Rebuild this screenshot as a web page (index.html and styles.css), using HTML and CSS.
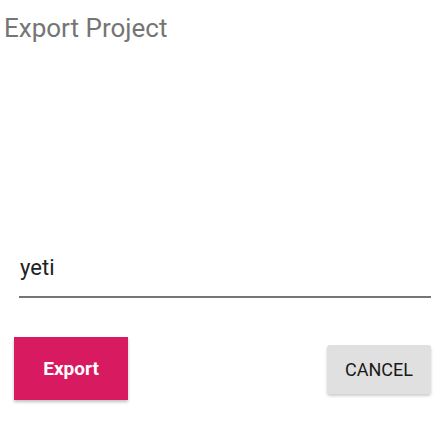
FILE: index.html
```html
<!DOCTYPE html>
<html lang="en">
<head>
    <meta charset="UTF-8">
    <meta name="viewport" content="width=device-width, initial-scale=1.0">
    <title>Export Project</title>
    <link rel="stylesheet" href="styles.css">
</head>
<body>
    <div class="dialog">
        <h2 class="dialog-title">Export Project</h2>
        <div class="field">
            <input type="text" class="name-input" value="yeti">
        </div>
        <div class="actions">
            <button class="btn-export">Export</button>
            <button class="btn-cancel">CANCEL</button>
        </div>
    </div>
</body>
</html>
```

FILE: styles.css
```css
body, html {
    margin: 0;
    padding: 0;
    height: 100%;
    font-family: Roboto, "Liberation Sans", sans-serif;
    background: #fff;
}

.dialog {
    padding: 0 17px 0 14px;
}

.dialog-title {
    margin: 0 0 0 -10px;
    padding-top: 12px;
    font-size: 26px;
    font-weight: normal;
    color: #757575;
    line-height: 32px;
}

.field {
    padding: 211px 0 0 5px;
}

.name-input {
    display: block;
    width: 100%;
    box-sizing: border-box;
    border: none;
    border-bottom: 2px solid #757575;
    padding: 0 0 15px 1px;
    font-family: inherit;
    font-size: 22px;
    line-height: 26px;
    color: #212121;
    outline: none;
    background: transparent;
}

.actions {
    display: flex;
    justify-content: space-between;
    align-items: center;
    margin-top: 39px;
}

.btn-export {
    width: 114px;
    height: 63px;
    border: none;
    background: #d81b60;
    color: #fff;
    font-family: inherit;
    font-size: 19px;
    font-weight: bold;
    box-shadow: 0 2px 3px rgba(0, 0, 0, 0.25);
}

.btn-cancel {
    width: 104px;
    height: 49px;
    margin-top: 2px;
    border: none;
    border-radius: 3px;
    background: #e0e0e0;
    color: #1a1a1a;
    font-family: inherit;
    font-size: 18px;
    box-shadow: 0 2px 3px rgba(0, 0, 0, 0.2);
}
```
